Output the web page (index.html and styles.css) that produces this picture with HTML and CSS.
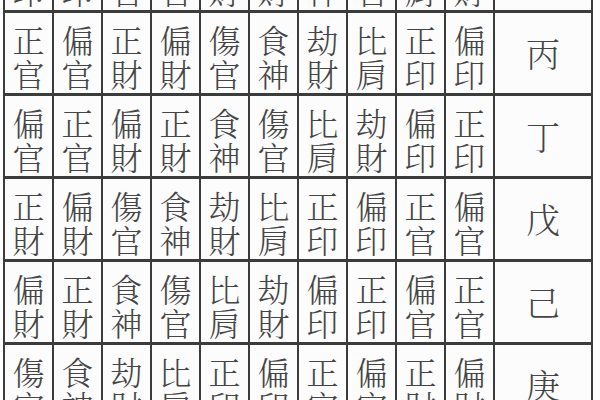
FILE: index.html
```html
<!DOCTYPE html>
<html lang="zh-Hant">
<head>
<meta charset="utf-8">
<title>十神表</title>
<link rel="stylesheet" href="styles.css">
</head>
<body>
<div class="viewport">
  <div class="grid">
    <div class="cell"><span>偏</span><span>印</span></div>
    <div class="cell"><span>正</span><span>印</span></div>
    <div class="cell"><span>偏</span><span>官</span></div>
    <div class="cell"><span>正</span><span>官</span></div>
    <div class="cell"><span>偏</span><span>財</span></div>
    <div class="cell"><span>正</span><span>財</span></div>
    <div class="cell"><span>食</span><span>神</span></div>
    <div class="cell"><span>傷</span><span>官</span></div>
    <div class="cell"><span>比</span><span>肩</span></div>
    <div class="cell"><span>劫</span><span>財</span></div>
    <div class="cell stem">乙</div>

    <div class="cell"><span>正</span><span>官</span></div>
    <div class="cell"><span>偏</span><span>官</span></div>
    <div class="cell"><span>正</span><span>財</span></div>
    <div class="cell"><span>偏</span><span>財</span></div>
    <div class="cell"><span>傷</span><span>官</span></div>
    <div class="cell"><span>食</span><span>神</span></div>
    <div class="cell"><span>劫</span><span>財</span></div>
    <div class="cell"><span>比</span><span>肩</span></div>
    <div class="cell"><span>正</span><span>印</span></div>
    <div class="cell"><span>偏</span><span>印</span></div>
    <div class="cell stem">丙</div>

    <div class="cell"><span>偏</span><span>官</span></div>
    <div class="cell"><span>正</span><span>官</span></div>
    <div class="cell"><span>偏</span><span>財</span></div>
    <div class="cell"><span>正</span><span>財</span></div>
    <div class="cell"><span>食</span><span>神</span></div>
    <div class="cell"><span>傷</span><span>官</span></div>
    <div class="cell"><span>比</span><span>肩</span></div>
    <div class="cell"><span>劫</span><span>財</span></div>
    <div class="cell"><span>偏</span><span>印</span></div>
    <div class="cell"><span>正</span><span>印</span></div>
    <div class="cell stem">丁</div>

    <div class="cell"><span>正</span><span>財</span></div>
    <div class="cell"><span>偏</span><span>財</span></div>
    <div class="cell"><span>傷</span><span>官</span></div>
    <div class="cell"><span>食</span><span>神</span></div>
    <div class="cell"><span>劫</span><span>財</span></div>
    <div class="cell"><span>比</span><span>肩</span></div>
    <div class="cell"><span>正</span><span>印</span></div>
    <div class="cell"><span>偏</span><span>印</span></div>
    <div class="cell"><span>正</span><span>官</span></div>
    <div class="cell"><span>偏</span><span>官</span></div>
    <div class="cell stem">戊</div>

    <div class="cell"><span>偏</span><span>財</span></div>
    <div class="cell"><span>正</span><span>財</span></div>
    <div class="cell"><span>食</span><span>神</span></div>
    <div class="cell"><span>傷</span><span>官</span></div>
    <div class="cell"><span>比</span><span>肩</span></div>
    <div class="cell"><span>劫</span><span>財</span></div>
    <div class="cell"><span>偏</span><span>印</span></div>
    <div class="cell"><span>正</span><span>印</span></div>
    <div class="cell"><span>偏</span><span>官</span></div>
    <div class="cell"><span>正</span><span>官</span></div>
    <div class="cell stem">己</div>

    <div class="cell"><span>傷</span><span>官</span></div>
    <div class="cell"><span>食</span><span>神</span></div>
    <div class="cell"><span>劫</span><span>財</span></div>
    <div class="cell"><span>比</span><span>肩</span></div>
    <div class="cell"><span>正</span><span>印</span></div>
    <div class="cell"><span>偏</span><span>印</span></div>
    <div class="cell"><span>正</span><span>官</span></div>
    <div class="cell"><span>偏</span><span>官</span></div>
    <div class="cell"><span>正</span><span>財</span></div>
    <div class="cell"><span>偏</span><span>財</span></div>
    <div class="cell stem">庚</div>
  </div>
</div>
</body>
</html>
```

FILE: styles.css
```css
html, body {
  margin: 0;
  padding: 0;
  background: #ffffff;
}

.viewport {
  width: 600px;
  height: 400px;
  overflow: hidden;
  background: #ffffff;
  padding-left: 3px;
  box-sizing: border-box;
}

.grid {
  display: grid;
  grid-template-columns: repeat(10, 47px) 96px;
  grid-auto-rows: 80px;
  column-gap: 2px;
  row-gap: 3px;
  padding: 2px;
  width: max-content;
  margin-top: -72px;
  background: #3b3d3d;
}

.cell {
  background: #fcfcfc;
  display: flex;
  flex-direction: column;
  align-items: center;
  justify-content: center;
  padding-top: 5px;
  box-sizing: border-box;
  font-family: "Noto Serif CJK TC", "Noto Serif CJK JP", "Noto Sans CJK TC", serif;
  font-size: 32px;
  line-height: 34px;
  color: #454545;
  font-weight: 300;
}

.cell span {
  display: block;
}

.stem {
  font-size: 34px;
  padding-top: 0;
}
```
